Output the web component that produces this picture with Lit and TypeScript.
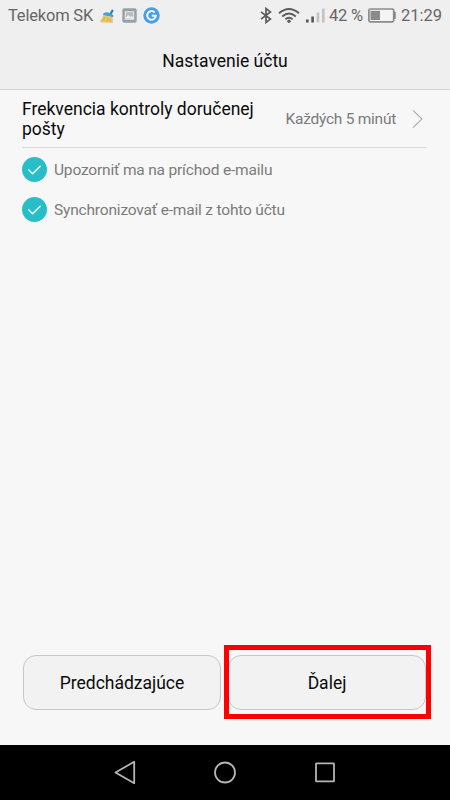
import { LitElement, html, css } from "lit";
import { customElement } from "lit/decorators.js";

@customElement("status-bar")
class StatusBar extends LitElement {
  static styles = css`
    :host { display: flex; height: 31px; align-items: center; box-sizing: border-box; padding: 0 8px 0 8px; color: #666; font-size: 16.5px; line-height: 31px; white-space: nowrap; }
    svg { display: block; flex: none; }
    .carrier { width: 85px; letter-spacing: -0.2px; }
    .broom { margin-left: 7px; }
    .photo { margin-left: 8px; }
    .google { margin-left: 6px; }
    .bluetooth { margin-left: auto; }
    .wifi { margin-left: 6px; }
    .signal { margin-left: 6px; }
    .percent { margin-left: 4px; width: 35px; letter-spacing: -0.2px; }
    .battery { margin-left: 4px; }
    .clock { margin-left: 5px; width: 41px; }
  `;

  render() {
    return html`
      <span class="carrier">Telekom SK</span>
      <svg class="broom" width="14" height="16" viewBox="0 0 14 16">
        <path d="M9.2 5.8 12 1.3 13.8 2.4 11.4 6.8Z" fill="#327fae" />
        <path d="M3.5 5.2Q6 3.8 8.5 4.6L12.6 6.4Q14.2 7.6 12.8 9.2L3 7.6Z" fill="#49a1d0" />
        <path d="M3 7 12.6 9 13 14.8 1 14.6 0 12.8 2 10.6Z" fill="#e7c66e" />
        <path d="m5 9.5-2 3.5m5-3-1 4m3-3 .5 3" stroke="#cfa552" stroke-width=".7" fill="none" />
      </svg>
      <svg class="photo" width="15" height="15" viewBox="0 0 15 15">
        <rect x=".3" y=".3" width="14.4" height="14.4" rx="2" fill="#97a1a7" />
        <rect x="3.3" y="3.8" width="8.4" height="7.4" fill="#b3bbc0" stroke="#e8ecee" stroke-width="1" />
        <path d="m3.8 9.4 2.4-2.6 2.2 2.1 1.3-1.1 1.8 1.6v1.4H3.8Z" fill="#e8ecee" />
      </svg>
      <svg class="google" width="17" height="17" viewBox="0 0 17 17">
        <circle cx="8.5" cy="8.5" r="8.2" fill="#469eea" />
        <path d="M11.7 5.5A4.3 4.3 0 1 0 12.8 8.8H8.8" fill="none" stroke="#f5f8fb" stroke-width="2" />
      </svg>

      <svg class="bluetooth" width="12" height="17" viewBox="0 0 12 17">
        <path d="m1 4.8 9.4 7.3-4.4 3.4v-14l4.4 3.4L1 12.2" fill="none" stroke="#5c5c5c" stroke-width="1.7" />
      </svg>
      <svg class="wifi" width="22" height="17" viewBox="0 0 22 17">
        <path d="M1 6.3Q11-2.3 21 6.3M4.2 9.5Q11 3.6 17.8 9.5M7.4 12.3Q11 9.2 14.6 12.3" fill="none" stroke="#5c5c5c" stroke-width="2" />
        <circle cx="11" cy="14.2" r="1.7" fill="#5c5c5c" />
      </svg>
      <svg class="signal" width="19" height="16" viewBox="0 0 19 16">
        <path d="M0 11.5h2.6v3H0zM5.3 8.5h2.6v6H5.3z" fill="#555" />
        <path d="M10.7 4.5h2.6v10h-2.6zM16 .5h2.6v14H16z" fill="#c3c3c3" />
      </svg>
      <span class="percent">42 %</span>
      <svg class="battery" width="28" height="15" viewBox="0 0 28 15">
        <rect x=".9" y="1" width="24.8" height="12.8" rx="1.5" fill="#f4f4f4" stroke="#8a8a8a" stroke-width="1.7" />
        <path d="M2.5 2.8H12v9.2H2.5z" fill="#8a8a8a" />
        <path d="M26 3.7h.9q.9 0 .9.9v5.6q0 .9-.9.9H26z" fill="#8a8a8a" />
      </svg>
      <span class="clock">21:29</span>
    `;
  }
}

@customElement("check-row")
class CheckRow extends LitElement {
  static styles = css`
    :host { display: flex; height: 40px; align-items: center; color: #7b7b7b; font-size: 15.5px; letter-spacing: -0.18px; white-space: nowrap; }
    svg { margin-right: 7px; flex: none; }
    .label { padding-top: 2px; }
  `;

  render() {
    return html`
      <svg width="25" height="25" viewBox="0 0 25 25">
        <circle cx="12.5" cy="12.5" r="12.5" fill="#27bec8" />
        <path d="m6.7 12.8 3.8 3.9 7.8-7.5" fill="none" stroke="#f5ffff" stroke-width="1.5" stroke-linecap="round" />
      </svg>
      <span class="label"><slot></slot></span>
    `;
  }
}

@customElement("nav-bar")
class NavBar extends LitElement {
  static styles = css`
    :host { display: flex; height: 55px; background: #000; justify-content: center; align-items: center; gap: 76px; }
    svg { display: block; }
  `;

  render() {
    return html`
      <svg width="24" height="24" viewBox="0 0 24 24">
        <path d="M21.2.8v21.4L2.5 11.5Z" fill="none" stroke="#b5b5b5" stroke-width="1.8" stroke-linejoin="round" />
      </svg>
      <svg width="24" height="24" viewBox="0 0 24 24">
        <circle cx="12" cy="11.5" r="10" fill="none" stroke="#b5b5b5" stroke-width="1.8" />
      </svg>
      <svg width="24" height="24" viewBox="0 0 24 24">
        <rect x="3" y="2.4" width="18" height="18" rx=".5" fill="none" stroke="#b5b5b5" stroke-width="1.8" />
      </svg>
    `;
  }
}

@customElement("app-root")
class AppRoot extends LitElement {
  static styles = css`
    :host { display: flex; flex-direction: column; width: 450px; height: 800px; overflow: hidden; background: #f7f7f7; color: #0b0b0b; font-family: Roboto, sans-serif; }
    .top { height: 90px; box-sizing: border-box; background: #efefef; border-bottom: 1px solid #d5d5d5; flex: none; }
    .title { margin: 0; text-align: center; font-size: 17.5px; line-height: 60px; font-weight: 400; height: 58px; }
    .content { flex: 1; padding: 0 23px 0 22px; }
    .setting { display: flex; align-items: center; height: 58px; box-sizing: border-box; border-bottom: 1px solid #d8d8d8; }
    .name { width: 250px; font-size: 17.5px; line-height: 20px; }
    .value { margin-left: auto; padding-top: 1px; font-size: 15.5px; letter-spacing: -0.25px; color: #7b7b7b; width: 111.5px; white-space: nowrap; line-height: 20px; }
    .chevron { margin: 0 4px 0 15px; }
    .checks { padding-top: 1px; }
    .actions { display: flex; gap: 7px; padding: 0 23px 35px; }
    .button { appearance: none; position: relative; flex: none; width: 198px; height: 55px; box-sizing: border-box; padding: 1px 0 0; border: 1px solid #c7c7c7; border-radius: 13px; background: #f2f2f2; color: #0b0b0b; font: 17.5px/52px Roboto, sans-serif; }
    .highlight { position: absolute; inset: -11px -6px -10px -5px; border: 5px solid #f00; pointer-events: none; }
  `;

  render() {
    return html`
      <header class="top">
        <status-bar></status-bar>
        <h1 class="title">Nastavenie účtu</h1>
      </header>
      <main class="content">
        <div class="setting">
          <span class="name">Frekvencia kontroly doručenej pošty</span>
          <span class="value">Každých 5 minút</span>
          <svg class="chevron" width="11" height="20" viewBox="0 0 11 20">
            <path d="m1 1.3 9 8.7-9 8.7" fill="none" stroke="#aaa" stroke-width="1.1" />
          </svg>
        </div>
        <div class="checks">
          <check-row>Upozorniť ma na príchod e-mailu</check-row>
          <check-row>Synchronizovať e-mail z tohto účtu</check-row>
        </div>
      </main>
      <div class="actions">
        <button class="button">Predchádzajúce</button>
        <button class="button">Ďalej<span class="highlight"></span></button>
      </div>
      <nav-bar></nav-bar>
    `;
  }
}
